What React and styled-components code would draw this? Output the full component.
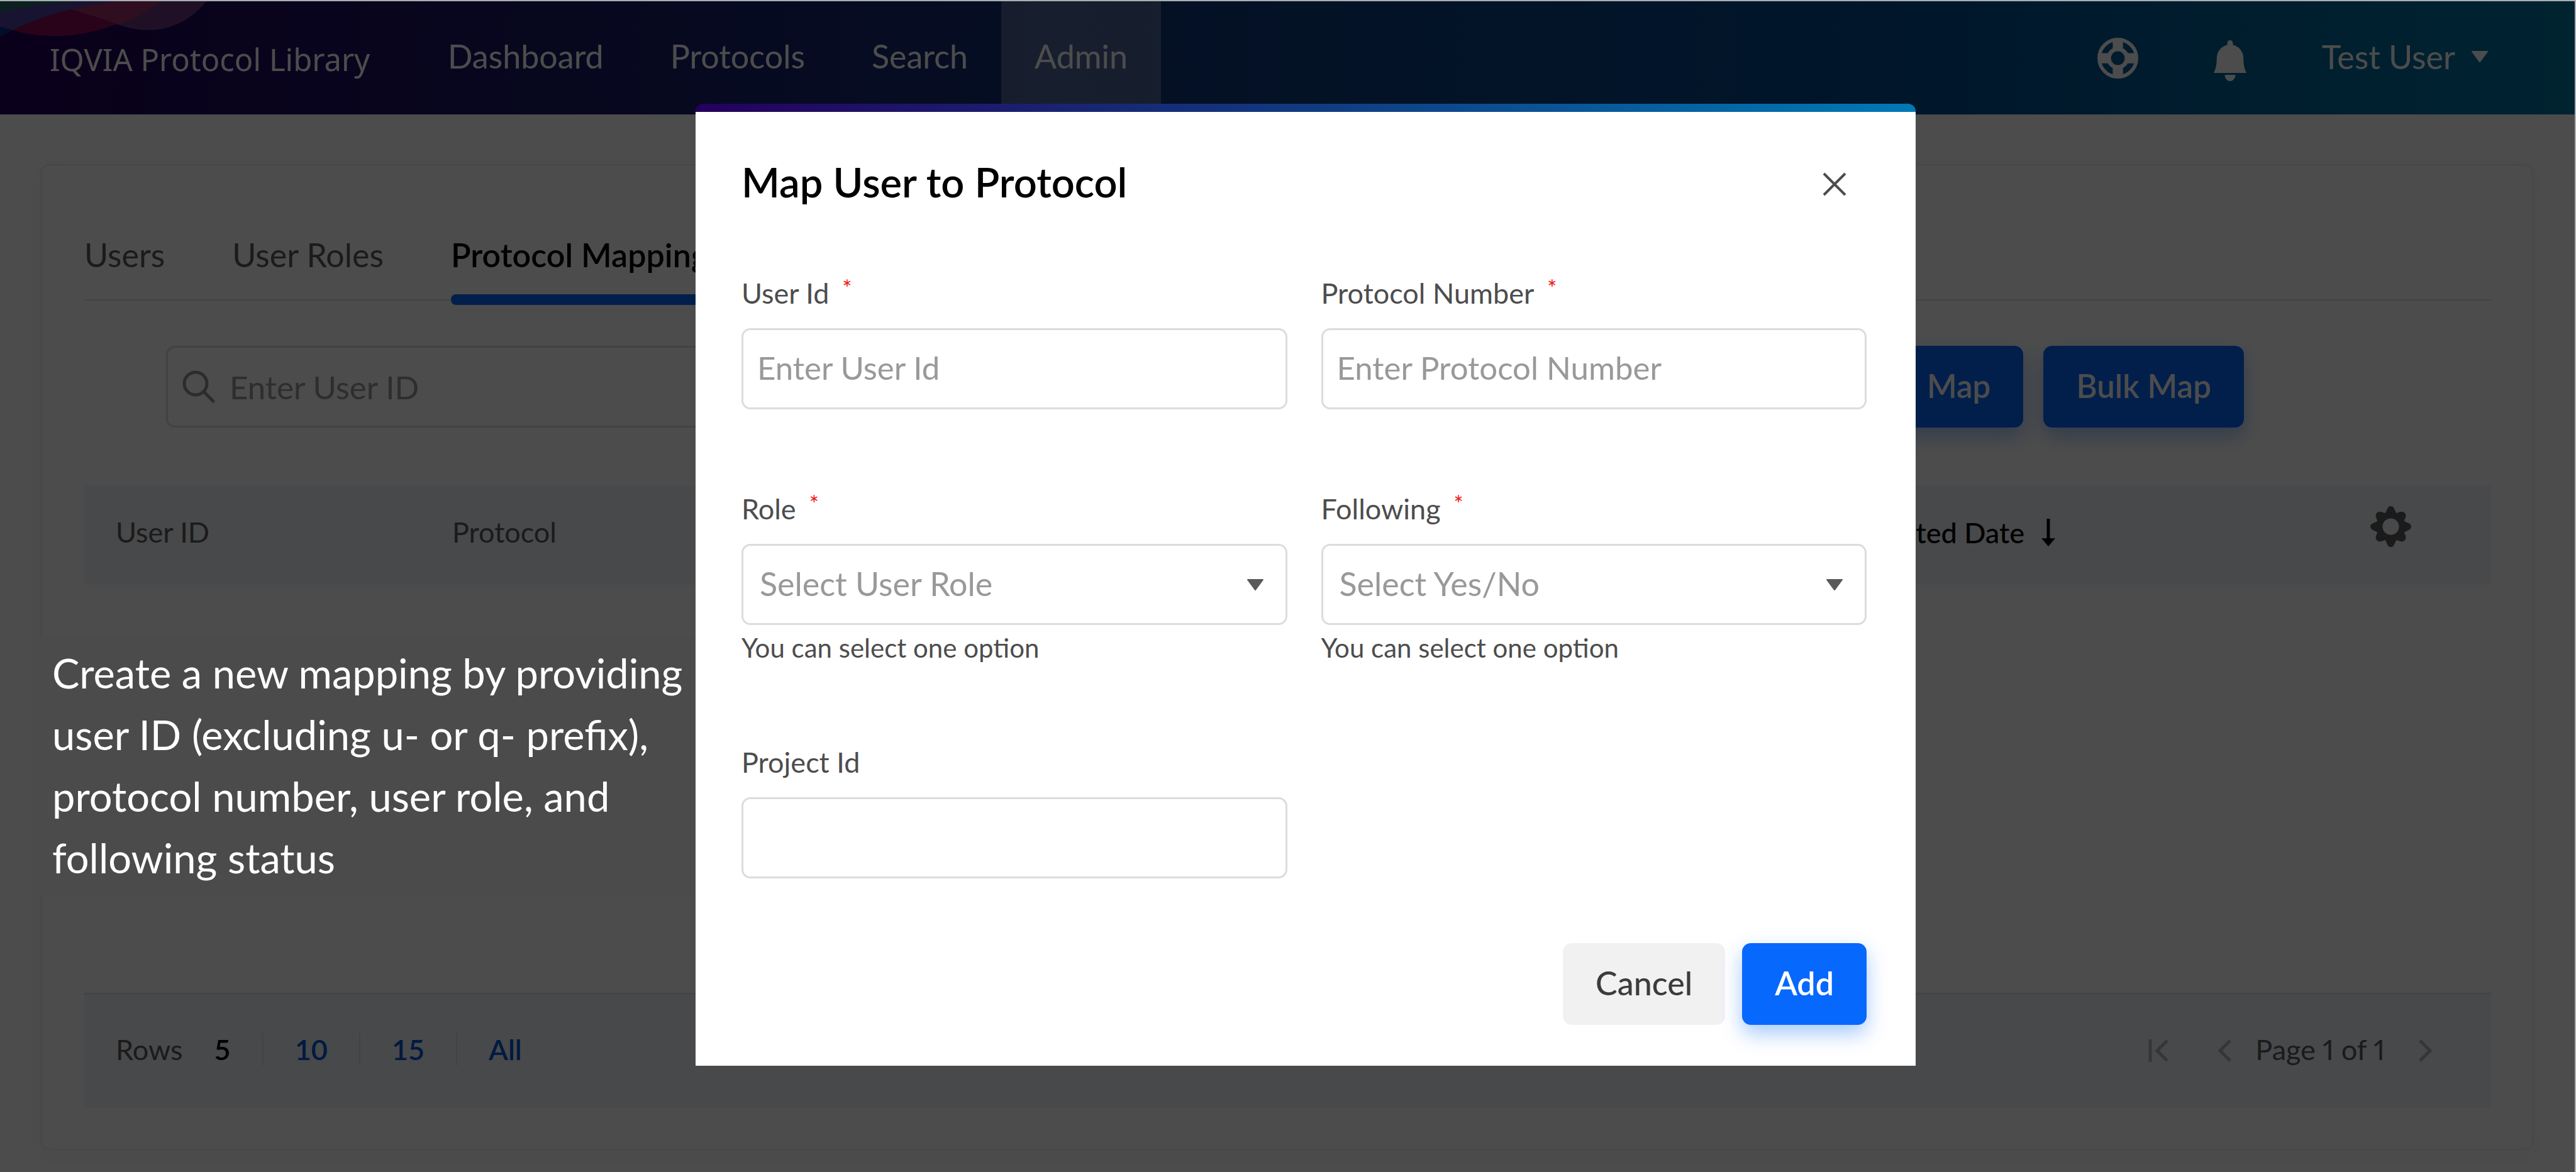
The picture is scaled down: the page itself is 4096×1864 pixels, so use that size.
import React from "react";
import styled, { createGlobalStyle, css } from "styled-components";

const color = {
  blue: "#0768fd",
  link: "#0057d9",
  ink: "#000000",
  label: "#4d4d4d",
  muted: "#5a5a5a",
  placeholder: "#999999",
  line: "#dcdcdc",
  band: "#f2f4f9",
};

const GlobalStyle = createGlobalStyle`
  *, *::before, *::after { box-sizing: border-box; }
  body { margin: 0; background: #ffffff; }
  body, button, input, select { font-family: Lato, "Open Sans", sans-serif; }
  button, input, select { margin: 0; }
`;

const Shell = styled.div`
  position: relative;
  display: flex;
  flex-direction: column;
  min-height: 100vh;
  border-top: 2px solid #a9afb2;
  border-right: 2px solid #b0b0b0;
  overflow: hidden;
`;

/* ---------- header ---------- */

const Header = styled.header`
  position: relative;
  display: flex;
  align-items: stretch;
  height: 180px;
  padding: 0 138px 0 79px;
  color: #ffffff;
  background: linear-gradient(
    90deg,
    #24005a 0%,
    #17206a 27%,
    #0f3c80 50%,
    #034a90 74%,
    #00629a 86%,
    #0076a2 100%
  );
`;

const Waves = styled.svg`
  position: absolute;
  top: 0;
  left: 0;
  width: 377px;
  height: 62px;
`;

const Brand = styled.a`
  position: relative;
  display: flex;
  align-items: center;
  padding-top: 4px;
  width: 580px;
  color: inherit;
  font-family: "Noto Sans", "Open Sans", sans-serif;
  font-size: 49px;
  text-decoration: none;
  white-space: nowrap;
`;

const Nav = styled.nav`
  display: flex;
  flex: 1;
`;

const NavLink = styled.a`
  display: flex;
  align-items: center;
  padding: 0 53px 6px;
  font-size: 52px;
  color: inherit;
  text-decoration: none;
  background: ${(p) => (p.$active ? "rgba(255, 255, 255, 0.25)" : "none")};
`;

const HeaderTools = styled.div`
  display: flex;
  align-items: center;
  gap: 120px;
`;

const PlainButton = styled.button`
  display: flex;
  align-items: center;
  gap: ${(p) => p.$gap || 0}px;
  padding: ${(p) => p.$pad || "0"};
  border: 0;
  background: none;
  color: ${(p) => p.$color || "inherit"};
  font-size: ${(p) => p.$size || 52}px;
  font-weight: ${(p) => p.$weight || 400};
  white-space: nowrap;
`;

/* ---------- page card ---------- */

const Main = styled.main`
  display: flex;
  flex: 1;
  flex-direction: column;
  padding: 79px 66px 35px 65px;
`;

const Card = styled.section`
  display: flex;
  flex: 1;
  flex-direction: column;
  padding: 92px 65px 64px 67px;
  border: 2px solid #ededed;
  border-radius: 14px;
  box-shadow: 0 10px 40px 20px rgba(0, 0, 0, 0.02);
`;

const Tabs = styled.div`
  display: flex;
  gap: 107px;
  border-bottom: 2px solid #e0e0e0;
`;

const Tab = styled.button`
  position: relative;
  padding: 20px 0 41px;
  border: 0;
  background: none;
  font-size: 52px;
  line-height: 60px;
  font-weight: ${(p) => (p.$active ? 600 : 400)};
  color: ${(p) => (p.$active ? color.ink : color.muted)};
  ${(p) =>
    p.$active &&
    css`
      &::after {
        content: "";
        position: absolute;
        right: 0;
        bottom: -9px;
        left: 0;
        height: 17px;
        border-radius: 8px;
        background: ${color.blue};
      }
    `}
`;

const Toolbar = styled.div`
  display: flex;
  justify-content: space-between;
  align-items: center;
  gap: 32px;
  padding: 72px 393px 93px 130px;
`;

const SearchBox = styled.label`
  display: flex;
  align-items: center;
  gap: 23px;
  flex: 0 1 1200px;
  height: 130px;
  padding: 0 23px;
  border: 3px solid ${color.line};
  border-radius: 14px;
  color: #949494;
`;

const SearchInput = styled.input`
  flex: 1;
  min-width: 0;
  padding: 0;
  border: 0;
  outline: 0;
  background: none;
  font-size: 51px;
  &::placeholder {
    color: ${color.placeholder};
    opacity: 1;
  }
`;

const ButtonRow = styled.div`
  display: flex;
  justify-content: flex-end;
  gap: ${(p) => p.$gap}px;
`;

const Button = styled.button`
  height: 130px;
  padding: 0 52px 4px;
  border: 0;
  border-radius: 14px;
  font-size: ${(p) => p.$size || 52}px;
  font-weight: ${(p) => (p.$primary ? 600 : 500)};
  color: ${(p) => (p.$primary ? "#ffffff" : "#3c3c3c")};
  background: ${(p) => (p.$primary ? color.blue : "#f1f1f1")};
  box-shadow: ${(p) => (p.$primary ? "0 14px 32px rgba(7, 104, 253, 0.35)" : "none")};
`;

/* ---------- table ---------- */

const Table = styled.table`
  width: 100%;
  table-layout: fixed;
  border-collapse: collapse;
`;

const HeadCell = styled.th`
  height: 157px;
  width: ${(p) => (p.$width ? `${p.$width}px` : "auto")};
  padding: ${(p) => p.$pad || "0 50px 12px"};
  background: ${color.band};
  color: ${color.muted};
  font-size: 45px;
  font-weight: 400;
  text-align: left;
  vertical-align: middle;
`;

const CellEnd = styled.div`
  display: flex;
  justify-content: flex-end;
`;

const TableFooter = styled.footer`
  display: flex;
  justify-content: space-between;
  align-items: center;
  height: 184px;
  margin-top: auto;
  padding: 0 93px 8px 50px;
  border-top: 3px solid #e2e4e6;
  background: ${color.band};
  color: ${color.muted};
  font-size: 45px;
`;

const RowChoices = styled.div`
  display: flex;
  align-items: center;
`;

const RowChoice = styled.button`
  height: 52px;
  padding: 0 50px;
  border: 0;
  border-left: ${(p) => (p.$first ? "0" : "2px solid #dfe2e5")};
  background: none;
  font-size: 45px;
  line-height: 52px;
  font-weight: 600;
  color: ${(p) => (p.$first ? color.ink : color.link)};
`;

const Pager = styled.div`
  display: flex;
  align-items: center;
  font-size: 45px;
  font-variant-numeric: proportional-nums;
`;

const PagerIcon = styled.button`
  display: flex;
  padding: 4px ${(p) => p.$right || 0}px 0 ${(p) => p.$left || 0}px;
  border: 0;
  background: none;
  color: #b4b4b4;
`;

/* ---------- dialog ---------- */

const Overlay = styled.div`
  position: absolute;
  inset: 0;
  display: flex;
  justify-content: center;
  align-items: flex-start;
  padding: 163px 0 0 58px;
  background: rgba(0, 0, 0, 0.7);
`;

const Dialog = styled.form`
  flex: 0 1 1940px;
  padding: 71px 78px 65px 73px;
  border-top: 13px solid transparent;
  border-radius: 12px 12px 0 0;
  background:
    linear-gradient(#ffffff, #ffffff) padding-box,
    linear-gradient(90deg, #24005c, #113a80 50%, #0079b5) border-box;
`;

const DialogHeader = styled.div`
  display: flex;
  justify-content: space-between;
  align-items: center;
  padding-right: 32px;
  margin-bottom: 107px;
`;

const DialogTitle = styled.h2`
  margin: 0;
  font-size: 65px;
  line-height: 80px;
  font-weight: 600;
  color: ${color.ink};
`;

const FieldGrid = styled.div`
  display: grid;
  grid-template-columns: 1fr 1fr;
  gap: 128px 54px;
  align-items: start;
  margin-bottom: 103px;
`;

const Field = styled.div`
  display: flex;
  flex-direction: column;
`;

const FieldLabel = styled.label`
  display: flex;
  gap: 21px;
  margin-bottom: 26px;
  font-size: 45px;
  line-height: 60px;
  color: ${color.label};
`;

const Required = styled.span`
  font-size: 36px;
  line-height: 44px;
  color: #f01818;
`;

const controlBox = css`
  width: 100%;
  height: 129px;
  border: 3px solid ${color.line};
  border-radius: 14px;
  outline: 0;
  background: #ffffff;
`;

const TextInput = styled.input`
  ${controlBox}
  padding: 0 22px 4px;
  font-size: 51px;
  &::placeholder {
    color: ${color.placeholder};
    opacity: 1;
  }
`;

const SelectWrap = styled.div`
  display: grid;
  align-items: center;
  color: ${color.muted};
  > * {
    grid-area: 1 / 1;
  }
  > svg {
    justify-self: end;
    margin-right: 38px;
    pointer-events: none;
  }
`;

const SelectInput = styled.select`
  ${controlBox}
  padding: 0 26px 4px;
  font-size: 52px;
  appearance: none;
  color: ${color.placeholder};
`;

const Helper = styled.p`
  margin: 12px 0 0;
  font-size: 42px;
  line-height: 48px;
  color: ${color.label};
`;

const Caption = styled.p`
  position: absolute;
  top: 1009px;
  left: 59px;
  width: 1047px;
  margin: 0;
  padding: 10px 0 12px 24px;
  background: #4b4b4b;
  color: #ffffff;
  font-size: 65px;
  line-height: 98px;
  white-space: nowrap;
`;

const CaptionLine = styled.span`
  display: block;
`;

/* ---------- drawings ---------- */

const Caret = () => (
  <svg width="26" height="18" viewBox="0 0 26 18" fill="currentColor" aria-hidden="true">
    <path d="M1 0h24a1 1 0 0 1 .8 1.6L14 17.4a1.3 1.3 0 0 1-2 0L.2 1.6A1 1 0 0 1 1 0z" />
  </svg>
);

const HelpIcon = () => (
  <svg width="65" height="65" viewBox="-104 -104 208 208" fill="none" stroke="currentColor" aria-hidden="true">
    <circle r="95" strokeWidth="18" />
    <circle r="46" strokeWidth="22" />
    <path d="M0-100V-44M0 44V100M-100 0H-44M44 0H100" strokeWidth="52" />
  </svg>
);

const BellIcon = () => (
  <svg width="52" height="65" viewBox="0 0 166 208" fill="currentColor" aria-hidden="true">
    <path d="M83 0c8 0 14 6 14 14v9c31 8 53 34 54 68 0 29 3 50 15 75H0c12-25 15-46 15-75 1-34 23-60 54-68v-9C69 6 75 0 83 0zM56 176h54c0 18-12 32-27 32s-27-14-27-32z" />
  </svg>
);

const SearchIcon = () => (
  <svg width="52" height="52" viewBox="0 0 52 52" fill="none" stroke="currentColor" strokeWidth="5" strokeLinecap="round" aria-hidden="true">
    <circle cx="21" cy="21" r="18" />
    <path d="M34 34l15 15" />
  </svg>
);

const SortIcon = () => (
  <svg width="24" height="44" viewBox="0 0 24 44" aria-hidden="true">
    <path d="M12 0v34" stroke="currentColor" strokeWidth="5" />
    <path d="M1 31h22L12 44z" fill="currentColor" />
  </svg>
);

const GearIcon = () => (
  <svg width="65" height="65" viewBox="-104 -104 208 208" aria-hidden="true">
    {[0, 45, 90, 135].map((turn) => (
      <path
        key={turn}
        transform={`rotate(${turn})`}
        fill="currentColor"
        d={
          turn % 90
            ? "M-34 60Q-24 72-20 86-12 100 0 100 12 100 20 86 24 72 34 60V-60Q24-72 20-86 12-100 0-100-12-100-20-86-24-72-34-60z"
            : "M-34 60Q-24 74-18 90-12 104 0 104 12 104 18 90 24 74 34 60V-60Q24-74 18-90 12-104 0-104-12-104-18-90-24-74-34-60z"
        }
      />
    ))}
    <circle r="56" fill="none" stroke="currentColor" strokeWidth="30" />
    <circle r="42" fill={color.band} />
  </svg>
);

const Chevron = ({ flip, bar }) => (
  <svg width={bar ? 32 : 22} height="36" viewBox={bar ? "0 0 32 36" : "0 0 22 36"} fill="none" stroke="currentColor" strokeWidth="5" aria-hidden="true">
    {bar && <path d="M3 0v36" />}
    <path d={bar ? "M30 2L14 18l16 16" : flip ? "M2 2l16 16L2 34" : "M20 2L4 18l16 16"} />
  </svg>
);

const CloseIcon = () => (
  <svg width="38" height="38" viewBox="0 0 38 38" fill="none" stroke="currentColor" strokeWidth="4" aria-hidden="true">
    <path d="M2 2l34 34M36 2L2 36" />
  </svg>
);

const BrandWaves = () => (
  <Waves viewBox="0 6 1200 197" preserveAspectRatio="none" aria-hidden="true">
    <path fill="#6c3880" d="M240 6V30C420 55 560 110 600 125 700 158 790 158 850 138 940 110 990 70 1045 6z" />
    <path fill="#870d55" d="M65 152C180 185 310 192 420 170 600 135 700 75 815 6H240z" />
    <path fill="#9e2f6c" d="M340 42C440 68 560 110 600 125 690 90 740 55 815 6H560C480 15 410 25 340 42z" />
    <path fill="#002f93" d="M0 135L65 152 0 183z" />
    <path fill="#5040a0" d="M0 6H600C430 24 230 68 65 152L0 135z" />
    <path fill="#286b6b" d="M0 6H440C280 14 130 30 0 62z" />
  </Waves>
);

/* ---------- page ---------- */

const navItems = ["Dashboard", "Protocols", "Search", "Admin"];
const tabs = ["Users", "User Roles", "Protocol Mapping"];

function SelectField({ id, label, placeholder, options }) {
  return (
    <Field>
      <FieldLabel htmlFor={id}>
        {label}
        <Required>*</Required>
      </FieldLabel>
      <SelectWrap>
        <SelectInput id={id} defaultValue="">
          <option value="">{placeholder}</option>
          {options.map((o) => (
            <option key={o}>{o}</option>
          ))}
        </SelectInput>
        <Caret />
      </SelectWrap>
      <Helper>You can select one option</Helper>
    </Field>
  );
}

function TextField({ id, label, placeholder, required }) {
  return (
    <Field>
      <FieldLabel htmlFor={id}>
        {label}
        {required && <Required>*</Required>}
      </FieldLabel>
      <TextInput id={id} placeholder={placeholder} />
    </Field>
  );
}

export default function App() {
  return (
    <Shell>
      <GlobalStyle />
      <Header>
        <BrandWaves />
        <Brand href="#home">IQVIA Protocol Library</Brand>
        <Nav>
          {navItems.map((item) => (
            <NavLink key={item} href={`#${item.toLowerCase()}`} $active={item === "Admin"}>
              {item}
            </NavLink>
          ))}
        </Nav>
        <HeaderTools>
          <PlainButton aria-label="Help">
            <HelpIcon />
          </PlainButton>
          <PlainButton aria-label="Notifications" $pad="8px 0 0">
            <BellIcon />
          </PlainButton>
          <PlainButton $gap={26} $pad="0 0 4px">
            Test User
            <Caret />
          </PlainButton>
        </HeaderTools>
      </Header>

      <Main>
        <Card>
          <Tabs role="tablist">
            {tabs.map((tab, i) => (
              <Tab key={tab} role="tab" $active={i === 2}>
                {tab}
              </Tab>
            ))}
          </Tabs>
          <Toolbar>
            <SearchBox>
              <SearchIcon />
              <SearchInput placeholder="Enter User ID" aria-label="Enter User ID" />
            </SearchBox>
            <ButtonRow $gap={32}>
              <Button $primary $size={51}>
                Map
              </Button>
              <Button $primary $size={51}>
                Bulk Map
              </Button>
            </ButtonRow>
          </Toolbar>
          <Table>
            <thead>
              <tr>
                <HeadCell $width={535}>User ID</HeadCell>
                <HeadCell>Protocol</HeadCell>
                <HeadCell $width={500} $pad="0 0 10px">
                  <CellEnd>
                    <PlainButton $gap={26} $size={45} $weight={500} $color={color.ink}>
                      Created Date
                      <SortIcon />
                    </PlainButton>
                  </CellEnd>
                </HeadCell>
                <HeadCell $width={692} $pad="0 127px 28px 0">
                  <CellEnd>
                    <PlainButton aria-label="Table settings" $color={color.muted}>
                      <GearIcon />
                    </PlainButton>
                  </CellEnd>
                </HeadCell>
              </tr>
            </thead>
          </Table>
          <TableFooter>
            <RowChoices>
              Rows
              <RowChoice $first>5</RowChoice>
              <RowChoice>10</RowChoice>
              <RowChoice>15</RowChoice>
              <RowChoice>All</RowChoice>
            </RowChoices>
            <Pager>
              <PagerIcon aria-label="First page">
                <Chevron bar />
              </PagerIcon>
              <PagerIcon aria-label="Previous page" $left={78} $right={38}>
                <Chevron />
              </PagerIcon>
              Page 1 of 1
              <PagerIcon aria-label="Next page" $left={54}>
                <Chevron flip />
              </PagerIcon>
            </Pager>
          </TableFooter>
        </Card>
      </Main>

      <Overlay>
        <Dialog role="dialog" aria-labelledby="dialog-title">
          <DialogHeader>
            <DialogTitle id="dialog-title">Map User to Protocol</DialogTitle>
            <PlainButton type="button" aria-label="Close" $color={color.label} $pad="8px 0 0">
              <CloseIcon />
            </PlainButton>
          </DialogHeader>
          <FieldGrid>
            <TextField id="user-id" label="User Id" placeholder="Enter User Id" required />
            <TextField id="protocol-number" label="Protocol Number" placeholder="Enter Protocol Number" required />
            <SelectField id="role" label="Role" placeholder="Select User Role" options={["Primary", "Secondary"]} />
            <SelectField id="following" label="Following" placeholder="Select Yes/No" options={["Yes", "No"]} />
            <TextField id="project-id" label="Project Id" />
          </FieldGrid>
          <ButtonRow $gap={27}>
            <Button type="button">Cancel</Button>
            <Button type="button" $primary>
              Add
            </Button>
          </ButtonRow>
        </Dialog>
      </Overlay>

      <Caption>
        <CaptionLine>Create a new mapping by providing</CaptionLine>
        <CaptionLine>user ID (excluding u- or q- prefix),</CaptionLine>
        <CaptionLine>protocol number, user role, and</CaptionLine>
        <CaptionLine>following status</CaptionLine>
      </Caption>
    </Shell>
  );
}
